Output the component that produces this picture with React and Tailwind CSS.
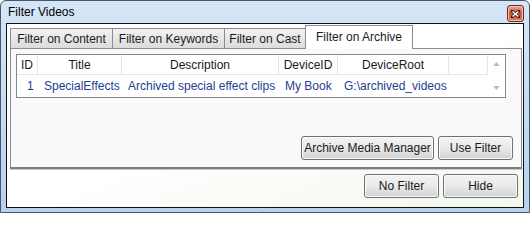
import React from 'react'

const tabs = [
  { label: 'Filter on Content', w: 'w-[103px]' },
  { label: 'Filter on Keywords', w: 'w-[113px]' },
  { label: 'Filter on Cast', w: 'w-[82px]' },
]

const columns = [
  { label: 'ID', w: 'w-[21px]' },
  { label: 'Title', w: 'w-[84px]' },
  { label: 'Description', w: 'w-[157px]' },
  { label: 'DeviceID', w: 'w-[59px]' },
  { label: 'DeviceRoot', w: 'w-[111px]' },
]

const row = ['1', 'SpecialEffects', 'Archived special effect clips', 'My Book', 'G:\\archived_videos']

function Button({ children, w }) {
  return (
    <button
      className={`${w} h-[24px] rounded-[3px] border border-[#707070] bg-gradient-to-b from-[#f3f3f3] via-[#e9e9e9] to-[#d3d3d3] shadow-[inset_0_0_0_1px_#fbfbfb] text-[12px] text-[#1b1b1b] leading-none`}
    >
      {children}
    </button>
  )
}

function CloseButton() {
  return (
    <div className="w-[17px] h-[17px] rounded-[3px] border border-[#6b2a1c] bg-gradient-to-b from-[#e9a995] via-[#c9553f] to-[#d9835f] flex items-center justify-center shadow-[inset_0_0_0_1px_#f2c3b2]">
      <svg width="9" height="8" viewBox="0 0 9 8">
        <path d="M1 1 L8 7 M8 1 L1 7" stroke="#3a1a12" strokeWidth="3" strokeLinecap="square" />
        <path d="M1.5 1.5 L7.5 6.5 M7.5 1.5 L1.5 6.5" stroke="#ffffff" strokeWidth="1.6" />
      </svg>
    </div>
  )
}

export default function App() {
  return (
    <div
      className="w-[530px] h-[213px] flex flex-col border border-[#4a5666] rounded-t-[6px] bg-gradient-to-b from-[#d5e6f7] via-[#c6dcf3] to-[#b7d1ee] overflow-hidden"
      style={{ fontFamily: '"Liberation Sans", Arial, sans-serif' }}
    >
      <div className="h-[22px] shrink-0 flex items-start justify-between pl-[7px] pr-[5px]">
        <span className="text-[12px] text-black mt-[5px] leading-none">Filter Videos</span>
        <div className="mt-[4px]">
          <CloseButton />
        </div>
      </div>

      <div className="flex-1 mx-[5px] mb-[4px] border border-[#101010] bg-gradient-to-br from-white via-white to-[#f2f8ec] flex flex-col">
        {/* tab strip */}
        <div className="h-[24px] shrink-0 flex items-end pl-[3px]">
          {tabs.map((t, i) => (
            <div
              key={t.label}
              className={`${t.w} ${i > 0 ? '-ml-px' : ''} h-[20px] border border-b-0 border-[#898c95] bg-gradient-to-b from-[#f2f2f2] to-[#dcdcdc] flex items-center justify-center text-[12px] text-[#1b1b1b] leading-none`}
            >
              {t.label}
            </div>
          ))}
          <div className="w-[108px] -ml-px h-[24px] -mb-px relative z-10 border border-b-0 border-[#898c95] bg-white flex items-center justify-center text-[12px] text-[#1b1b1b] leading-none pb-[1px]">
            Filter on Archive
          </div>
        </div>

        {/* tab panel */}
        <div className="h-[121px] shrink-0 ml-[3px] mr-[1px] border border-[#898c95] border-b-[2px] border-b-[#7d7d7d] shadow-[0_1px_0_#c8c8c8] bg-[#f9f9f9] flex flex-col pl-[5px] pr-[8px] pt-[5px] pb-[7px]">
          <div className="w-[490px] h-[44px] border border-[#828790] bg-white flex text-[12px] leading-none">
            <div className="flex-1 flex flex-col">
              <div className="h-[20px] flex border-b border-[#e5e5e5]">
                {columns.map((c) => (
                  <div key={c.label} className={`${c.w} border-r border-[#e5e5e5] flex items-center justify-center text-[#1b1b1b]`}>
                    {c.label}
                  </div>
                ))}
                <div className="flex-1 border-r border-[#e5e5e5]" />
              </div>
              <div className="h-[21px] flex text-[#1f3d91]">
                {row.map((v, i) => (
                  <div key={i} className={`${columns[i].w} flex items-center ${i === 0 ? 'pl-[10px]' : 'pl-[6px]'} whitespace-nowrap`}>
                    {v}
                  </div>
                ))}
              </div>
            </div>
            <div className="w-[17px] flex flex-col items-center justify-between py-[7px] bg-white">
              <svg width="7" height="4" viewBox="0 0 7 4"><path d="M3.5 0 L7 4 L0 4 Z" fill="#bdbdbd" /></svg>
              <svg width="7" height="4" viewBox="0 0 7 4"><path d="M0 0 L7 0 L3.5 4 Z" fill="#bdbdbd" /></svg>
            </div>
          </div>
          <div className="flex-1" />
          <div className="flex justify-end gap-[4px]">
            <Button w="w-[133px]">Archive Media Manager</Button>
            <Button w="w-[75px]">Use Filter</Button>
          </div>
        </div>

        {/* dialog buttons */}
        <div className="flex justify-end gap-[4px] pr-[5px] mt-[5px]">
          <Button w="w-[75px]">No Filter</Button>
          <Button w="w-[75px]">Hide</Button>
        </div>
      </div>
    </div>
  )
}
